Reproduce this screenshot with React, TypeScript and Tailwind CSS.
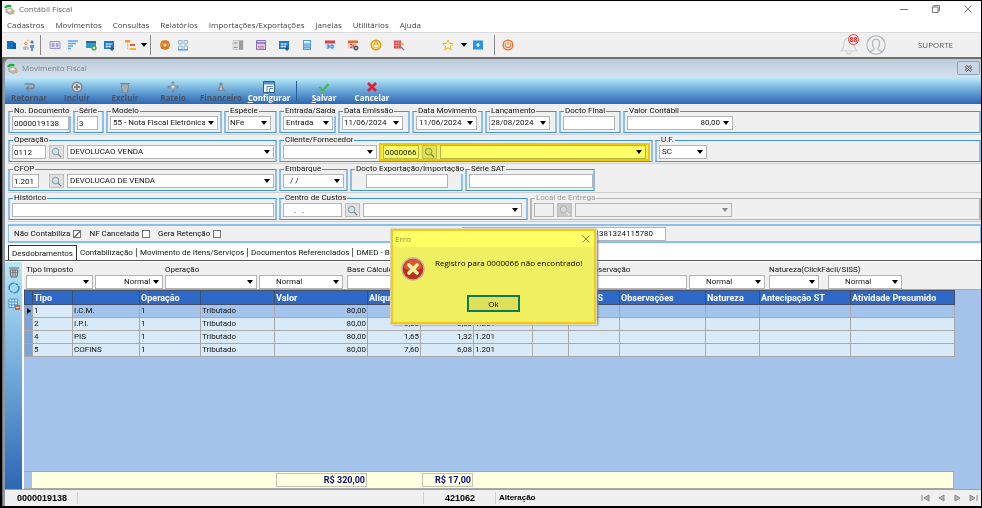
import { useState, type ReactNode } from 'react';
import clsx from 'clsx';

const CONTROL = 'h-[14px] border border-[#b4b4b4] bg-white text-[8px] leading-3 text-[#111] outline-none';

function Arrow({ className }: { className?: string }) {
  return (
    <svg viewBox="0 0 6 4" className={clsx('h-1 w-1.5', className)} aria-hidden="true">
      <path d="M0 0h6L3 4z" fill="currentColor" />
    </svg>
  );
}

function Combo({ id, label, value, options = [], width, className, disabled }: {
  id?: string;
  label?: string;
  value: string;
  options?: string[];
  width: string;
  className?: string;
  disabled?: boolean;
}) {
  const [current, setCurrent] = useState(value);
  return (
    <span className={clsx('relative flex', width)}>
      <select
        id={id}
        aria-label={label}
        value={current}
        disabled={disabled}
        onChange={(e) => setCurrent(e.target.value)}
        className={clsx(CONTROL, 'w-full appearance-none pr-3 disabled:bg-[#efefef]', className ?? 'pl-0.5')}
      >
        {[value, ...options].map((o) => <option key={o} value={o}>{o}</option>)}
      </select>
      <Arrow className={clsx('pointer-events-none absolute top-[5px] right-1', disabled ? 'text-[#888]' : 'text-black')} />
    </span>
  );
}

function Field({ id, label, value = '', className, disabled }: {
  id?: string;
  label?: string;
  value?: string;
  className: string;
  disabled?: boolean;
}) {
  return (
    <input
      id={id}
      aria-label={label}
      defaultValue={value}
      disabled={disabled}
      className={clsx(CONTROL, 'min-w-0 px-px disabled:bg-[#efefef]', className)}
    />
  );
}

function SearchButton({ label, disabled, className }: { label: string; disabled?: boolean; className?: string }) {
  return (
    <button
      type="button"
      aria-label={label}
      disabled={disabled}
      className={clsx('flex h-[14px] w-[15px] items-center justify-center border border-[#bdbdbd] bg-[#e1e1e1] disabled:bg-[#c9c9c9]', className)}
    >
      <svg viewBox="0 0 12 12" className="h-[11px] w-[11px]" fill="none">
        <circle cx="5" cy="5" r="3.6" stroke={disabled ? '#aaa' : '#7d9096'} fill={disabled ? '#d8d8d8' : '#cfe3e6'} />
        <path d="M7.8 7.8 11 11" stroke={disabled ? '#eee' : '#777'} strokeWidth="1.4" />
      </svg>
    </button>
  );
}

function Group({ title, htmlFor, className, muted, children }: {
  title: string;
  htmlFor: string;
  className: string;
  muted?: boolean;
  children: ReactNode;
}) {
  return (
    <fieldset
      className={clsx(
        'min-w-0 border-x-2 border-y pb-0.5 pl-0.5',
        muted ? 'border-[#b5b5b5]' : 'border-x-[#8cc0ea] border-y-[#3b92dd]',
        className,
      )}
    >
      <legend className={clsx('ml-px h-2.5 px-px text-[8px] leading-[10px] whitespace-nowrap', muted ? 'text-[#999]' : 'text-[#111]')}>
        <label htmlFor={htmlFor} className="block">{title}</label>
      </legend>
      <div className="flex">{children}</div>
    </fieldset>
  );
}

function Row({ children }: { children: ReactNode }) {
  return <div className="flex gap-0.5 border-b border-[#cfcfcf] pb-px">{children}</div>;
}

function AppIcon() {
  return (
    <svg viewBox="0 0 12 12" className="h-[11px] w-[11px]" aria-hidden="true">
      <path d="M2 6l5-2 4 3v3l-4 1.5L2 9z" fill="#b9bdb4" stroke="#87908a" strokeWidth=".6" />
      <path d="M3 6.5l3.5-1.3L9 7 5.5 8.5z" fill="#f2f3ea" />
      <path d="M0 3.5L3 .8l5 .4v2.2l-3.8.2L1.5 5z" fill="#18b52c" />
      <path d="M8.5 6.5h2v3.5h-2z" fill="#d9b24a" />
    </svg>
  );
}

function ToolButton({ label, className, children }: { label: string; className?: string; children: ReactNode }) {
  return (
    <button type="button" aria-label={label} className={clsx('flex h-5 items-center justify-center', className ?? 'w-[18px]')}>
      <svg viewBox="0 0 12 12" className="h-3 w-3" fill="none">{children}</svg>
    </button>
  );
}

function Separator({ className }: { className?: string }) {
  return <span className={clsx('h-5 w-px bg-[#8a8a8a]', className)} />;
}

function MainToolbar() {
  return (
    <div className="flex h-[25px] items-center border-t border-[#dcdcdc] bg-[#f0f0f0]">
      <ToolButton label="Empresa">
        <path d="M2 2h6l2 2v6H2z" fill="#1173c7" /><path d="M8 4h3v6H8z" fill="#0b5aa5" />
      </ToolButton>
      <ToolButton label="Participantes">
        <circle cx="3" cy="4.5" r="1.3" stroke="#e39454" /><circle cx="9" cy="3" r="1.6" fill="#3e7cc0" /><path d="M1 11V8h4v3M2.5 8v3" stroke="#a7a7a7" />
        <path d="M7 6h4v3h-1v3H8V9H7z" fill="#5b94cf" /><path d="M4 2l2-1" stroke="#e6b34a" />
      </ToolButton>
      <Separator className="mx-0.5" />
      <ToolButton label="Cadastro" className="ml-[3px] w-[18px]">
        <path d="M1 2.5h10v7H1z" fill="#e5e0f5" stroke="#9b92cf" /><path d="M2.5 5h3M2.5 7h3M7 5h2.5M7 7h2.5" stroke="#7468b8" />
      </ToolButton>
      <ToolButton label="Lista">
        <path d="M1 2h10M1 4.5h8M1 7h5M1 9.5h3" stroke="#5aa5e8" strokeWidth="1.3" />
      </ToolButton>
      <ToolButton label="Nova tela">
        <path d="M1 2h10v7H1z" fill="#2f9ad0" /><path d="M1 2h10v2H1z" fill="#2b6a88" /><circle cx="9" cy="9" r="2.6" fill="#3aa657" /><path d="M9 7.5v3M7.5 9h3" stroke="#fff" strokeWidth=".8" />
      </ToolButton>
      <ToolButton label="Calendário">
        <path d="M1 2h10v8H1z" fill="#1b79c9" /><path d="M2.5 5h7M2.5 7.5h5M4 4v5M7 4v5" stroke="#fff" strokeWidth=".7" /><path d="M9 8v4M7 10h4" stroke="#123e68" />
      </ToolButton>
      <button type="button" aria-label="Estrutura" className="ml-1 flex h-5 w-[26px] items-center justify-between pr-px pl-[3px]">
        <svg viewBox="0 0 12 12" className="h-3 w-3">
          <path d="M0 1h5v2.5H0z" fill="#f39a1e" /><path d="M5 5h5v2H5z" fill="#ea5a3c" /><path d="M5 9h6v2H5z" fill="#f3b81e" /><path d="M2.5 4v6H5M2.5 6H5" stroke="#d7b070" fill="none" strokeWidth=".6" />
        </svg>
        <Arrow className="text-black" />
      </button>
      <Separator className="mr-[5px] ml-0.5" />
      <ToolButton label="Moeda">
        <circle cx="6" cy="6" r="5" fill="#e8892b" /><path d="M2 3h8M2 9h8" stroke="#d06a18" /><circle cx="6" cy="6" r="2.2" fill="#fbd39a" stroke="#b85a14" strokeWidth=".6" />
      </ToolButton>
      <ToolButton label="Painel">
        <path d="M1.5 1.5h3.5v3.5H1.5zM7 1.5h3.5v3.5H7zM1.5 7h3.5v3.5H1.5zM7 7h3.5v3.5H7z" stroke="#8fb4d6" fill="#e2eef8" /><path d="M1 11h10" stroke="#3d88c9" />
      </ToolButton>
      <ToolButton label="Relatório" className="ml-[34px] w-[23px]">
        <path d="M1 1.5h10v9H1z" fill="#e2e2e2" stroke="#b5b5b5" strokeWidth=".6" /><path d="M7 1.5h4v9H7z" fill="#9c9c9c" /><path d="M2 4h3.5M2 8.5h3.5" stroke="#777" strokeWidth=".8" />
      </ToolButton>
      <ToolButton label="Salvar período" className="w-[23px]">
        <path d="M1.5 1.5h9v9h-9z" fill="#d5c9ec" stroke="#8776bd" /><path d="M1.5 4h9" stroke="#5b4a96" /><path d="M3 7.5h6M3 9h6" stroke="#c0647a" strokeWidth=".7" />
      </ToolButton>
      <ToolButton label="Agenda" className="w-[23px]">
        <path d="M1 2h10v8H1z" fill="#1b79c9" /><path d="M2.5 5h7M2.5 7.5h5M4 4v5M7 4v5" stroke="#fff" strokeWidth=".7" /><path d="M9 8v4M7 10h4" stroke="#123e68" />
      </ToolButton>
      <ToolButton label="Calculadora" className="w-[23px]">
        <path d="M2 1h8v10H2z" fill="#4d9ed6" /><path d="M3 2h6v2.5H3z" fill="#d9effb" /><path d="M3.5 6h5M3.5 7.8h5M3.5 9.6h5" stroke="#fff" strokeDasharray="1 1" />
      </ToolButton>
      <ToolButton label="Vencimentos" className="w-[23px]">
        <path d="M1 1.5h10v9H1z" fill="#cfe4f8" /><path d="M1 1.5h10v3H1z" fill="#e23f3f" /><path d="M3 6h2v3H3M3.5 7.5H5M7 6h2v3H7z" stroke="#2a68ad" strokeWidth=".8" />
      </ToolButton>
      <ToolButton label="Configurar datas" className="w-[23px]">
        <path d="M1 1.5h9v8H1z" fill="#f3c6b8" /><path d="M1 1.5h10v2.6H1z" fill="#ea6b2c" /><path d="M3 5.5h2v3H3M6.5 5.5v3" stroke="#c23a2a" strokeWidth=".8" /><circle cx="9" cy="9" r="2.5" fill="#55606b" /><circle cx="9" cy="9" r=".8" fill="#fff" />
      </ToolButton>
      <ToolButton label="Bloqueio" className="w-[23px]">
        <circle cx="6" cy="6" r="4.8" fill="#fbe08b" stroke="#dc9d10" strokeWidth="1.4" /><path d="M3.8 5.6h4.4v3H3.8z" fill="#fff" stroke="#dc9d10" strokeWidth=".6" /><path d="M4.6 5.5V4.4a1.4 1.4 0 012.8 0v1.1" stroke="#c98b08" strokeWidth=".8" />
      </ToolButton>
      <ToolButton label="Conferência" className="w-[23px]">
        <path d="M1 1.5h7v8H1z" fill="#df4040" /><path d="M1 4h7M1 6.5h7M3.3 1.5v8M5.7 1.5v8" stroke="#f7b3b3" strokeWidth=".6" /><path d="M8 2l3 4-1.5 1z" fill="#f3a71f" /><path d="M6 6l5 5" stroke="#7388a8" strokeWidth="1.3" />
      </ToolButton>
      <ToolButton label="Favoritos" className="ml-[26px] w-[23px]">
        <path d="M6 1l1.5 3.4 3.7.3-2.8 2.4.9 3.6L6 8.8l-3.3 1.9.9-3.6L.8 4.7l3.7-.3z" stroke="#f3b51b" fill="#fff8e0" />
      </ToolButton>
      <Arrow className="ml-0.5 text-black" />
      <ToolButton label="Pacote" className="ml-0.5 w-[18px]">
        <path d="M1 1.5h10v9H1z" fill="#2b93e8" /><path d="M6 4v4M4 6h4" stroke="#fff" strokeWidth="1.2" />
      </ToolButton>
      <Separator className="mr-1 ml-[7px]" />
      <ToolButton label="Sair">
        <circle cx="6" cy="6" r="4.8" stroke="#e8772e" strokeWidth="1.5" /><path d="M4 4.2a2.6 2.6 0 104 0M6 3v3" stroke="#e8772e" strokeWidth="1.1" />
      </ToolButton>

      <div className="ml-auto flex items-center pr-7">
        <button type="button" aria-label="88 notificações" className="relative mr-[7px]">
          <svg viewBox="0 0 20 20" className="h-5 w-5" fill="none" stroke="#cdcdcd" strokeWidth="1.1">
            <path d="M2 16c2-2 3-4 3-8a5 5 0 0110 0c0 4 1 6 3 8z" /><path d="M8 17a2 2 0 004 0" />
          </svg>
          <span className="absolute -top-px right-0 flex h-[11px] w-[11px] items-center justify-center rounded-full border border-[#e54545] bg-[#fde9e9] text-[7px] leading-none font-bold text-[#dc2222]">88</span>
        </button>
        <button type="button" aria-label="Usuário">
          <svg viewBox="0 0 20 20" className="h-5 w-5" fill="none" stroke="#a9b3b8" strokeWidth="1.1">
            <circle cx="10" cy="10" r="9.2" />
            <path d="M4.2 16.8c.6-1.5 3.8-1.4 4-2.8.1-1.2-1.8-2.5-1.8-5.6C6.4 5.8 7.8 4.2 10 4.2s3.6 1.6 3.6 4.2c0 3.1-1.9 4.4-1.8 5.6.2 1.4 3.4 1.3 4 2.8" />
          </svg>
        </button>
        <a href="#suporte" className="ml-8 text-[#555]">SUPORTE</a>
      </div>
    </div>
  );
}

function ActionButton({ text, mnemonic, disabled, children }: {
  text: string;
  mnemonic?: boolean;
  disabled?: boolean;
  children: ReactNode;
}) {
  return (
    <button
      type="button"
      disabled={disabled}
      className={clsx('flex w-12 flex-col items-center pt-1 text-[8px] leading-[10px] font-bold', disabled ? 'text-[#4b5468]' : 'text-white')}
    >
      <svg viewBox="0 0 12 12" className="h-3 w-3" fill="none">{children}</svg>
      <span>{mnemonic ? <><u>{text[0]}</u>{text.slice(1)}</> : text}</span>
    </button>
  );
}

function ActionBar() {
  return (
    <div className="flex h-[27px] bg-linear-to-b from-[#bdeefb] via-[#6ba8d8] to-[#2c67b3]">
      <ActionButton text="Retornar" disabled>
        <path d="M1.5 3H9a2.2 2.2 0 010 4.5H3.5M6 5L3.5 7.5 6 10" stroke="#7f858c" strokeWidth="1.6" />
      </ActionButton>
      <ActionButton text="Incluir" disabled>
        <circle cx="6" cy="6" r="4.8" stroke="#7f858c" strokeWidth="1.4" fill="#cfd6da" /><path d="M6 3v6M3 6h6" stroke="#7f858c" strokeWidth="1.8" />
      </ActionButton>
      <ActionButton text="Excluir" disabled>
        <path d="M1 2.5h10M2.5 4l1 7h5l1-7z" stroke="#7f858c" strokeWidth="1.2" fill="#cfd6da" /><path d="M5 5v5M7 5v5" stroke="#7f858c" />
      </ActionButton>
      <ActionButton text="Rateio" disabled>
        <path d="M6 0l2 2.5H4zM6 12l2-2.5H4zM0 6l2.5-2v4zM12 6L9.5 4v4z" fill="#7f858c" /><circle cx="6" cy="6" r="2.2" stroke="#7f858c" fill="#dfe6ea" />
      </ActionButton>
      <ActionButton text="Financeiro" disabled>
        <path d="M6 1l2 2-1 1.5 3.5 5.5h-9L5 4.5 4 3z" fill="#858b92" /><path d="M6 5v4M4.8 8h2.4" stroke="#dde3e8" strokeWidth=".8" />
      </ActionButton>
      <ActionButton text="Configurar" mnemonic>
        <path d="M.5.5h11v11H.5z" fill="#f4f8fc" stroke="#2a5c94" /><path d="M1 1h10v2.5H1z" fill="#5a94cc" /><path d="M4 11V5.5h6M6.5 11V7.5H10" stroke="#5f88b4" />
      </ActionButton>
      <span className="mx-[3px] w-px self-center bg-[#2b5a9a] py-2.5" />
      <ActionButton text="Salvar" mnemonic>
        <path d="M1.5 6l3 4 6-7" stroke="#3bc42d" strokeWidth="2" />
      </ActionButton>
      <ActionButton text="Cancelar">
        <path d="M2 2l8 8M10 2l-8 8" stroke="#dd1f35" strokeWidth="2.8" />
      </ActionButton>
    </div>
  );
}

function DocumentForm() {
  return (
    <form className="pt-0.5 pl-[3px] font-['Roboto',sans-serif]">
      <Row>
        <Group title="No. Documento" htmlFor="documento" className="w-[63px]">
          <Field id="documento" value="0000019138" className="w-[57px]" />
        </Group>
        <Group title="Série" htmlFor="serie" className="w-[31px]">
          <Field id="serie" value="3" className="w-[21px]" />
        </Group>
        <Group title="Modelo" htmlFor="modelo" className="w-[116px]">
          <Combo id="modelo" value="55 - Nota Fiscal Eletrônica" width="w-[108px]" />
        </Group>
        <Group title="Espécie" htmlFor="especie" className="w-[53px]">
          <Combo id="especie" value="NFe" width="w-[43px]" className="pl-px" />
        </Group>
        <Group title="Entrada/Saída" htmlFor="entrada" className="w-[57px]">
          <Combo id="entrada" value="Entrada" options={['Saída']} width="w-[50px]" />
        </Group>
        <Group title="Data Emissão" htmlFor="emissao" className="w-[72px]">
          <Combo id="emissao" value="11/06/2024" width="w-[61px]" className="pl-px" />
        </Group>
        <Group title="Data Movimento" htmlFor="movimento" className="w-[71px]">
          <Combo id="movimento" value="11/06/2024" width="w-[61px]" />
        </Group>
        <Group title="Lançamento" htmlFor="lancamento" className="w-[72px]">
          <Combo id="lancamento" value="28/08/2024" width="w-[61px]" className="pl-px" />
        </Group>
        <Group title="Docto Final" htmlFor="final" className="w-[62px]">
          <Field id="final" className="w-[52px]" />
        </Group>
        <Group title="Valor Contábil" htmlFor="valor" className="flex-1">
          <Combo id="valor" value="80,00" width="w-[106px]" className="text-right" />
        </Group>
      </Row>
      <Row>
        <Group title="Operação" htmlFor="operacao" className="w-[269px]">
          <Field id="operacao" value="0112" className="w-[34px]" />
          <SearchButton label="Buscar operação" className="mx-[3px]" />
          <Combo label="Descrição da operação" value="DEVOLUCAO VENDA" width="w-[207px]" />
        </Group>
        <Group title="Cliente/Fornecedor" htmlFor="cliente" className="w-[374px]">
          <Combo id="cliente" value="" options={['Cliente', 'Fornecedor']} width="w-[94px]" />
          <div className="relative ml-1.5 flex">
            <Field label="Código do cliente" value="0000066" className="w-9" />
            <SearchButton label="Buscar cliente" className="mx-[3px]" />
            <Combo label="Nome do cliente" value="" width="w-[206px]" />
            <span className="pointer-events-none absolute -inset-x-1 -inset-y-0.5 border-2 border-[#ffd400] bg-[#ffff66] mix-blend-multiply" />
          </div>
        </Group>
        <Group title="U.F." htmlFor="uf" className="flex-1">
          <Combo id="uf" value="SC" options={['PR', 'RS']} width="w-[48px]" />
        </Group>
      </Row>
      <Row>
        <Group title="CFOP" htmlFor="cfop" className="w-[269px]">
          <Field id="cfop" value="1.201" className="mr-[7px] w-[27px]" />
          <SearchButton label="Buscar CFOP" className="mx-[3px]" />
          <Combo label="Descrição do CFOP" value="DEVOLUCAO DE VENDA" width="w-[207px]" />
        </Group>
        <Group title="Embarque" htmlFor="embarque" className="w-[69px]">
          <Combo id="embarque" value="/  /" width="w-[61px]" className="pl-1.5 whitespace-pre" />
        </Group>
        <Group title="Docto Exportação/Importação" htmlFor="exportacao" className="w-[113px]">
          <Field id="exportacao" className="ml-3 w-[82px]" />
        </Group>
        <Group title="Série SAT" htmlFor="sat" className="w-[130px]">
          <Field id="sat" className="w-[124px]" />
        </Group>
      </Row>
      <Row>
        <Group title="Histórico" htmlFor="historico" className="w-[269px]">
          <Field id="historico" className="w-[262px]" />
        </Group>
        <Group title="Centro de Custos" htmlFor="custos" className="w-[249px]">
          <Field id="custos" value="  .   ." className="w-[59px] pl-1.5" />
          <SearchButton label="Buscar centro de custos" className="mx-[3px]" />
          <Combo label="Nome do centro de custos" value="" width="w-[159px]" />
        </Group>
        <Group title="Local de Entrega" htmlFor="entrega" className="flex-1" muted>
          <Field id="entrega" className="w-[20px]" disabled />
          <SearchButton label="Buscar local de entrega" className="mx-[3px]" disabled />
          <Combo label="Nome do local de entrega" value="" width="w-[157px]" disabled />
        </Group>
      </Row>
      <div className="mt-0.5 flex h-[19px] items-center border-x border-y-2 border-[#8cc0ea] pl-[5px] text-[8px] text-[#111]">
        <div className="flex w-[448px] gap-2">
          {['Não Contabiliza', 'NF Cancelada', 'Gera Retenção'].map((text, i) => (
            <label key={text} className="flex items-center gap-[3px]">
              {text}
              <input
                type="checkbox"
                defaultChecked={i === 0}
                className="h-2 w-2 appearance-none border border-[#777] bg-white checked:bg-[linear-gradient(135deg,transparent_45%,#777_45%,#777_60%,transparent_60%)]"
              />
            </label>
          ))}
        </div>
        <Field label="Chave de acesso" value="42240600000000000001381324115780" className="w-[204px] pr-3 text-right" />
      </div>
    </form>
  );
}

const TABS = ['Desdobramentos', 'Contabilização', 'Movimento de Itens/Serviços', 'Documentos Referenciados', 'DMED - Beneficiários'];

function Tabs() {
  const [active, setActive] = useState(0);
  return (
    <div role="tablist" className="mt-px flex h-[17px] items-end border-b border-[#555] bg-white px-[3px] text-[8px]">
      {TABS.map((tab, i) => (
        <button
          key={tab}
          type="button"
          role="tab"
          aria-selected={i === active}
          onClick={() => setActive(i)}
          className={clsx('flex h-[15px] items-center whitespace-nowrap text-[#111]', i === active && 'border-x border-t border-[#333]')}
        >
          <span className={clsx('px-[3px] leading-[9px]', i !== active && i < TABS.length - 1 && 'border-r border-[#666]')}>{tab}</span>
        </button>
      ))}
    </div>
  );
}

function Filter({ title, children }: { title?: string; children: ReactNode }) {
  return (
    <div className="flex flex-col">
      <span className="h-[11px] leading-[11px] whitespace-nowrap text-[#111]">{title}</span>
      {children}
    </div>
  );
}

function FilterBar() {
  return (
    <div className="flex h-7 gap-0.5 border-b border-[#a8a8a8] bg-[#f0f0f0] pt-0.5 pl-0.5 text-[8px]">
      <Filter title="Tipo Imposto"><Combo label="Tipo Imposto" value="" width="w-[67px]" /></Filter>
      <Filter><Combo label="Modo do tipo de imposto" value="Normal" width="w-[68px]" className="pl-7" /></Filter>
      <Filter title="Operação"><Combo label="Operação do desdobramento" value="" width="w-[92px]" /></Filter>
      <Filter><Combo label="Modo da operação" value="Normal" width="w-[84px]" className="pl-4" /></Filter>
      <div className="pl-0.5"><Filter title="Base Cálculo"><Field label="Base Cálculo" className="w-[108px]" /></Filter></div>
      <Filter><Combo label="Modo da base" value="" width="w-[129px]" className="pl-4" /></Filter>
      <Filter title="Observação"><Field label="Observação" className="w-[99px]" /></Filter>
      <Filter><Combo label="Modo da observação" value="Normal" width="w-[76px]" className="pl-4" /></Filter>
      <div className="w-[59px] pl-0.5">
        <Filter title="Natureza(ClickFácil/SISS)"><Combo label="Natureza" value="" width="w-[50px]" /></Filter>
      </div>
      <Filter><Combo label="Modo da natureza" value="Normal" width="w-[74px]" className="pl-4" /></Filter>
    </div>
  );
}

const COLUMNS = [
  { title: '', width: 'w-2' },
  { title: 'Tipo', width: 'w-[40px]' },
  { title: '', width: 'w-[67px]' },
  { title: 'Operação', width: 'w-[61px]' },
  { title: '', width: 'w-[74px]' },
  { title: 'Valor', width: 'w-[93px]', right: true },
  { title: 'Alíquota', width: 'w-[53px]', right: true },
  { title: '', width: 'w-[53px]', right: true },
  { title: '', width: 'w-[59px]' },
  { title: '', width: 'w-[36px]' },
  { title: 'Aj.ICMS', width: 'w-[51px]' },
  { title: 'Observações', width: 'w-[86px]' },
  { title: 'Natureza', width: 'w-[54px]' },
  { title: 'Antecipação ST', width: 'w-[91px]' },
  { title: 'Atividade Presumido', width: 'w-[104px]' },
];

const ROWS = [
  ['', '1', 'I.C.M.', '1', 'Tributado', '80,00', '', '', ''],
  ['', '2', 'I.P.I.', '1', 'Tributado', '80,00', '0,00', '0,00', '1.201'],
  ['', '4', 'PIS', '1', 'Tributado', '80,00', '1,65', '1,32', '1.201'],
  ['', '5', 'COFINS', '1', 'Tributado', '80,00', '7,60', '6,08', '1.201'],
];

function TaxGrid() {
  return (
    <div className="flex flex-1 flex-col bg-[#a3c3ea]">
      <table className="w-[930px] table-fixed border-collapse text-[8px] leading-3">
        <colgroup>
          {COLUMNS.map((c, i) => <col key={i} className={c.width} />)}
        </colgroup>
        <thead>
          <tr className="h-[14px] bg-[#2e69c8] text-left text-[9px] text-white">
            {COLUMNS.map((c, i) => (
              <th key={i} className="overflow-hidden border border-[#444f66] px-px py-0 whitespace-nowrap">{c.title}</th>
            ))}
          </tr>
        </thead>
        <tbody className="text-[#111]">
          {ROWS.map((row, r) => (
            <tr key={r} className={clsx('h-[13px]', r === 0 ? 'bg-[#a3c3ea]' : 'bg-[#d8eaf7]')}>
              {COLUMNS.map((c, i) => (
                <td
                  key={i}
                  className={clsx('border border-[#a8a8a8] px-px py-0', c.right && 'text-right', i === 0 && 'bg-[#7ba5dd]', r === 0 && i === 1 && 'bg-[#d8eaf7]')}
                >
                  {i === 0 && r === 0
                    ? <svg viewBox="0 0 4 6" className="mx-auto h-1.5 w-1"><path d="M0 0l4 3-4 3z" fill="#000" /></svg>
                    : row[i]}
                </td>
              ))}
            </tr>
          ))}
        </tbody>
      </table>
      <div className="mt-auto flex h-[18px] w-[930px] items-center border-y border-r border-[#a8a8a8] bg-[#ffffe1] text-[9px] leading-3 font-bold text-[#0a0a80]">
        <span className="h-full w-2 bg-[#a3c3ea]" />
        <output className="ml-[244px] w-[91px] border border-[#c4c4b4] pr-px text-right">R$ 320,00</output>
        <output className="ml-[55px] w-[51px] border border-[#c4c4b4] pr-px text-right">R$ 17,00</output>
      </div>
    </div>
  );
}

function SideBar() {
  return (
    <div className="flex w-[19px] flex-col items-center gap-1 border-r-2 border-white bg-linear-to-b from-[#b8e6f6] via-[#6fa9da] to-[#2c67b3] pt-1">
      <button type="button" aria-label="Excluir linha">
        <svg viewBox="0 0 12 12" className="h-3 w-3" fill="none" stroke="#666">
          <path d="M1 2h10M2 4l1 7h6l1-7z" fill="#ccc" /><path d="M4.5 4v6M6 4v6M7.5 4v6M3 6.5h6" strokeWidth=".6" />
        </svg>
      </button>
      <button type="button" aria-label="Atualizar">
        <svg viewBox="0 0 12 12" className="h-3 w-3" fill="none" stroke="#2786d3" strokeWidth="1.4">
          <path d="M6.5 1.2A4.8 4.8 0 001.5 8M5.5 10.8A4.8 4.8 0 0010.5 4M7.5 1.5l2.5 1.8M4.5 10.5L2 8.7" />
        </svg>
      </button>
      <button type="button" aria-label="Remover da grade">
        <svg viewBox="0 0 12 12" className="h-3 w-3" fill="none">
          <path d="M1 1h8.5v8.5H1zM1 4h8.5M1 6.8h8.5M3.8 1v8.5M6.7 1v8.5" stroke="#3d8fd6" fill="#dff0fb" strokeWidth=".9" /><path d="M7 7h5v5H7z" fill="#e35a2b" /><path d="M8 9.5h3" stroke="#fff" />
        </svg>
      </button>
    </div>
  );
}

function StatusBar() {
  return (
    <div className="flex h-[17px] items-center border-t border-[#a0a0a0] bg-[#f0f0f0] font-['Liberation_Sans',sans-serif] text-[9px] font-bold text-black">
      <span className="w-[73px] border-r border-[#d0d0d0] pl-3">0000019138</span>
      <span className="w-[346px] border-r border-[#d0d0d0]">&nbsp;</span>
      <span className="w-[72px] border-r border-[#d0d0d0] pl-[21px]">421062</span>
      <span className="flex-1 pl-[3px] text-[8px]">Alteração</span>
      <div className="flex gap-1 pr-0.5">
        {[
          ['Primeiro', 'M1 1v6M8 1L3 4l5 3z'],
          ['Anterior', 'M7 1L2 4l5 3z'],
          ['Próximo', 'M2 1l5 3-5 3z'],
          ['Último', 'M8 1v6M1 1l5 3-5 3z'],
        ].map(([label, d]) => (
          <button key={label} type="button" aria-label={label} className="w-3">
            <svg viewBox="0 0 9 8" className="mx-auto h-2 w-[9px]" fill="#b5b5b5" stroke="#888"><path d={d} /></svg>
          </button>
        ))}
      </div>
    </div>
  );
}

function ErrorDialog({ onClose }: { onClose: () => void }) {
  return (
    <div role="alertdialog" aria-labelledby="erro" className="absolute top-[228px] left-[389px] flex h-[95px] w-[205px] flex-col border-2 border-[#f5c911] bg-[#efef5f] shadow-[0_0_0_1px_#d8d8c8,2px_1px_2px_#777]">
      <div className="flex h-4 items-center justify-between bg-[#ffff66] pr-1 pl-0.5 text-[#8d8d3b]">
        <h2 id="erro">Erro</h2>
        <button type="button" aria-label="Fechar" onClick={onClose}>
          <svg viewBox="0 0 8 8" className="h-2 w-2" stroke="#77773a" strokeWidth=".9"><path d="M.5.5l7 7M7.5.5l-7 7" /></svg>
        </button>
      </div>
      <div className="flex gap-2.5 pt-2.5 pl-2">
        <svg viewBox="0 0 24 24" className="h-6 w-6" aria-hidden="true">
          <circle cx="12" cy="12" r="11" fill="#b8301c" stroke="#c9b0a0" strokeWidth="1.5" />
          <path d="M3 11a9 9 0 0118 0c-5 3-13 3-18 0z" fill="#e0552f" />
          <path d="M8 8l8 8M16 8l-8 8" stroke="#f7f2a0" strokeWidth="3.6" strokeLinecap="round" />
        </svg>
        <p className="whitespace-nowrap text-black">Registro para 0000066 não encontrado!</p>
      </div>
      <button type="button" onClick={onClose} className="mt-auto mb-2.5 h-[17px] w-[53px] self-center border-2 border-[#0e7a55] bg-[#dfdf58] leading-3 text-black">
        Ok
      </button>
    </div>
  );
}

export default function App() {
  const [error, setError] = useState(true);

  return (
    <div className="relative flex min-h-screen flex-col border border-b-2 border-l-2 border-black bg-white font-['Open_Sans',sans-serif] text-[8px] leading-3">
      <header>
        <div className="flex h-4 items-center gap-1 pl-0.5 text-[#666]">
          <AppIcon />
          <h1>Contábil Fiscal</h1>
          <div className="mr-[9px] ml-auto flex gap-6 text-[#777]">
            <button type="button" aria-label="Minimizar"><svg viewBox="0 0 8 8" className="h-2 w-2" stroke="currentColor"><path d="M0 4.5h8" /></svg></button>
            <button type="button" aria-label="Restaurar"><svg viewBox="0 0 8 8" className="h-2 w-2" stroke="currentColor" fill="none"><path d="M.5 2h5.5v5.5H.5zM2 2V.5h5.5V6H6" /></svg></button>
            <button type="button" aria-label="Fechar janela"><svg viewBox="0 0 8 8" className="h-2 w-2" stroke="currentColor"><path d="M.5.5l7 7M7.5.5l-7 7" /></svg></button>
          </div>
        </div>
        <nav className="flex h-[15px] items-center gap-[11px] pl-[5px] text-[#444]">
          {['Cadastros', 'Movimentos', 'Consultas', 'Relatórios', 'Importações/Exportações', 'Janelas', 'Utilitários', 'Ajuda'].map((item) => (
            <a key={item} href={`#${item.toLowerCase()}`}>{item}</a>
          ))}
        </nav>
        <MainToolbar />
      </header>

      <main className="flex flex-1 flex-col bg-[#6f6f6f] pt-0.5 pl-px">
        <div className="flex flex-1 flex-col rounded-tl-md border-l-2 border-[#8b98a8] bg-[#f0f0f0]">
          <div className="flex h-[18px] items-center gap-1 rounded-tl-md bg-linear-to-b from-[#bccbda] to-[#d5e1ee] pl-0.5 text-[#7c8188]">
            <AppIcon />
            <h2>Movimento Fiscal</h2>
            <button type="button" aria-label="Fechar movimento" className="mr-px ml-auto flex h-3.5 w-[23px] items-center justify-center rounded-xs border border-[#8ea3bd] bg-[#c9d6e6]">
              <svg viewBox="0 0 9 7" className="h-[7px] w-[9px]" fill="none"><path d="M1.5 1l6 5M7.5 1l-6 5" stroke="#555" strokeWidth="2.6" /><path d="M1.5 1l6 5M7.5 1l-6 5" stroke="#fff" strokeWidth="1" /></svg>
            </button>
          </div>
          <ActionBar />
          <DocumentForm />
          <div className="flex flex-1 flex-col font-['Roboto',sans-serif]">
            <Tabs />
            <div className="flex flex-1 border-t border-white">
              <SideBar />
              <div className="flex min-w-0 flex-1 flex-col">
                <FilterBar />
                <TaxGrid />
              </div>
            </div>
          </div>
          <StatusBar />
        </div>
      </main>

      {error && <ErrorDialog onClose={() => setError(false)} />}
    </div>
  );
}
